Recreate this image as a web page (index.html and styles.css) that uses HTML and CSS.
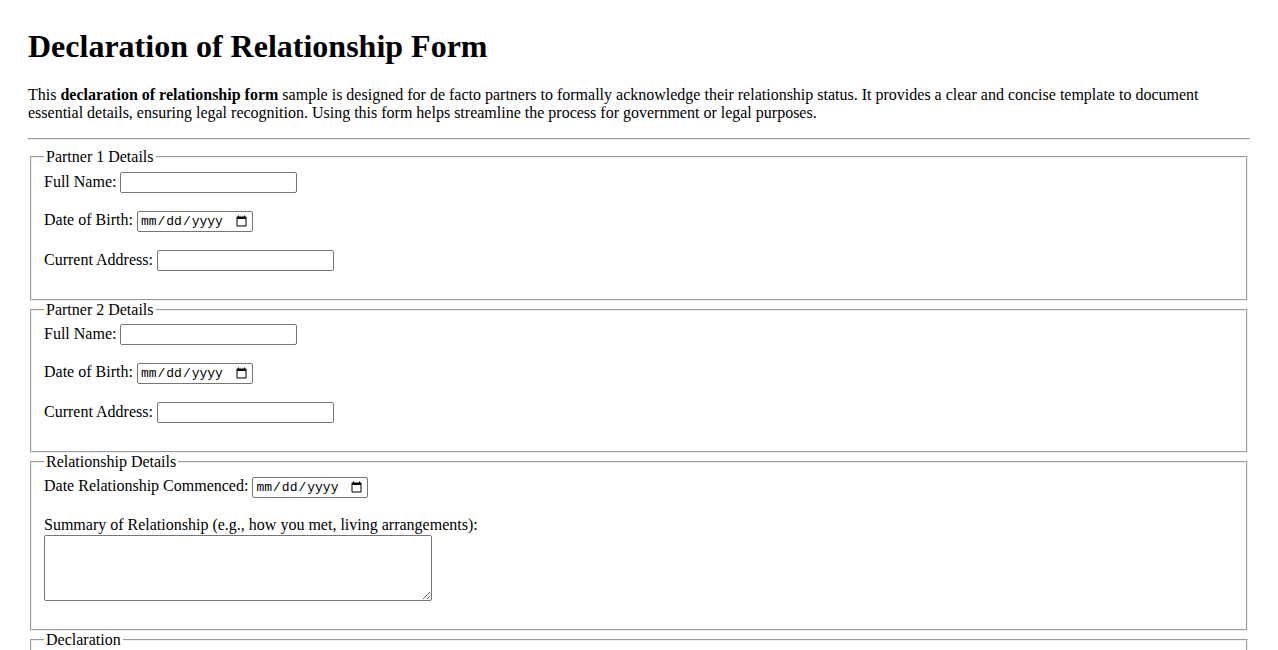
FILE: index.html
```html
<!DOCTYPE html>
<html lang="en">
<head>
<meta charset="utf-8">
<title>Declaration of Relationship Form</title>
<link rel="stylesheet" href="styles.css">
</head>
<body>
<h1 class="title">Declaration of Relationship Form</h1>
<p class="intro">This <strong>declaration of relationship form</strong> sample is designed for de facto partners to formally acknowledge their relationship status. It provides a clear and concise template to document essential details, ensuring legal recognition. Using this form helps streamline the process for government or legal purposes.</p>
<hr class="rule">
<form class="form">
  <fieldset class="group">
    <legend class="legend">Partner 1 Details</legend>
    <label for="p1name">Full Name:</label> <input class="text-field" type="text" id="p1name"><br><br>
    <label for="p1dob">Date of Birth:</label> <input class="date-field" type="date" id="p1dob"><br><br>
    <label for="p1addr">Current Address:</label> <input class="text-field" type="text" id="p1addr"><br><br>
  </fieldset>
  <fieldset class="group">
    <legend class="legend">Partner 2 Details</legend>
    <label for="p2name">Full Name:</label> <input class="text-field" type="text" id="p2name"><br><br>
    <label for="p2dob">Date of Birth:</label> <input class="date-field" type="date" id="p2dob"><br><br>
    <label for="p2addr">Current Address:</label> <input class="text-field" type="text" id="p2addr"><br><br>
  </fieldset>
  <fieldset class="group">
    <legend class="legend">Relationship Details</legend>
    <label for="rdate">Date Relationship Commenced:</label> <input class="date-field" type="date" id="rdate"><br><br>
    <label for="rsummary">Summary of Relationship (e.g., how you met, living arrangements):</label><br>
    <textarea class="summary" id="rsummary"></textarea><br><br>
  </fieldset>
  <fieldset class="group">
    <legend class="legend">Declaration</legend>
    <input type="checkbox" id="agree"> <label for="agree">We declare that the information provided is true and correct.</label><br><br>
    <label for="sig1">Partner 1 Signature:</label> <input class="text-field" type="text" id="sig1"><br><br>
    <label for="sig2">Partner 2 Signature:</label> <input class="text-field" type="text" id="sig2"><br><br>
    <label for="sdate">Date:</label> <input class="date-field" type="date" id="sdate"><br><br>
  </fieldset>
  <br>
  <button class="submit" type="submit">Submit Declaration</button>
</form>
</body>
</html>
```
FILE: styles.css
```css
body {
  margin: 0;
  padding: 28px 28px 28px 28px;
  font-family: "Liberation Serif", "Times New Roman", serif;
  font-size: 16px;
  color: #000;
  background: #fff;
}

.title {
  margin: 0 0 21px 0;
  font-size: 32px;
  font-weight: bold;
}

.intro {
  margin: 0 0 16px 0;
}

.rule {
  margin: 0 0 8px 0;
}

.form {
  margin: 0;
}

.group {
  margin: 0 2px;
  padding: 0.35em 0.75em 0.625em;
}

.legend {
  padding: 0 2px;
}

.text-field {
  box-sizing: border-box;
  width: 177px;
  height: 21px;
  padding: 1px 2px;
  border: 1px solid #767676;
  border-radius: 2px;
  font: 13px "Liberation Sans", Arial, sans-serif;
  vertical-align: baseline;
}

.date-field {
  box-sizing: border-box;
  width: 116px;
  height: 21px;
  padding: 1px 2px;
  border: 1px solid #767676;
  border-radius: 2px;
  font: 13px "Liberation Mono", "DejaVu Sans Mono", monospace;
  color: #000;
}

.summary {
  box-sizing: border-box;
  width: 388px;
  height: 66px;
  margin-top: 1px;
  border: 1px solid #767676;
  border-radius: 2px;
  font: 13px "Liberation Mono", monospace;
  vertical-align: top;
}

.submit {
  font: 13px "Liberation Sans", Arial, sans-serif;
}
```
